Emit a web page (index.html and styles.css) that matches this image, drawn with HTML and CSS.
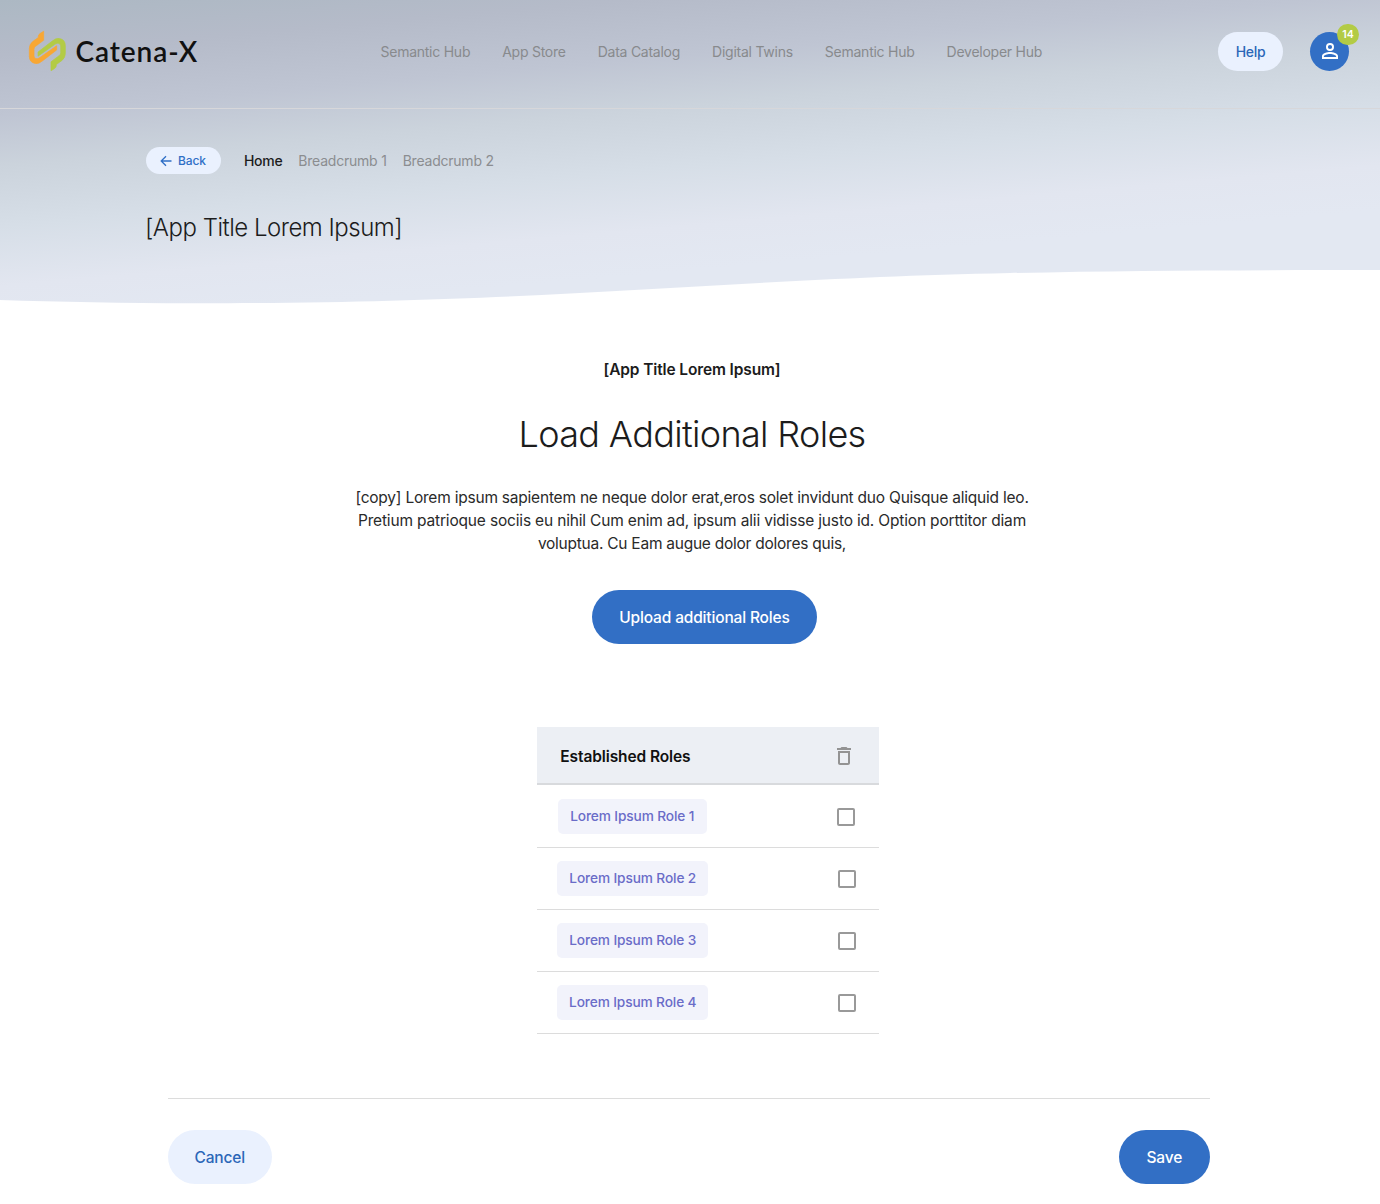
FILE: index.html
```html
<!DOCTYPE html>
<html lang="en">
<head>
<meta charset="utf-8">
<title>Catena-X – Load Additional Roles</title>
<link rel="stylesheet" href="styles.css">
</head>
<body>
<div class="hero">
  <header class="topbar">
    <a class="logo">
      <svg class="logo-mark" viewBox="0 0 132 138" preserveAspectRatio="none" stroke-width="2" aria-hidden="true">
        <path fill="#f8a734" stroke="#f8a734" d="M53 12V38L28 56Q24 59 24 64V81Q24 92 34 91Q39 90 43 87L92 54V66L50 97Q38 107 28 105Q10 102 10 84V62Q10 50 20 42L37 30V27Q37 22 42 19Z"/>
        <path fill="#b3cb45" stroke="#b3cb45" transform="rotate(180 64 69)" d="M53 12V38L28 56Q24 59 24 64V81Q24 92 34 91Q39 90 43 87L92 54V66L50 97Q38 107 28 105Q10 102 10 84V62Q10 50 20 42L37 30V27Q37 22 42 19Z"/>
      </svg>
      <span class="logo-name">Catena-X</span>
    </a>
    <nav class="nav">
      <a>Semantic Hub</a><a>App Store</a><a>Data Catalog</a><a>Digital Twins</a><a>Semantic Hub</a><a>Developer Hub</a>
    </nav>
    <div class="account">
      <button class="help">Help</button>
      <div class="avatar">
        <svg viewBox="0 0 24 24" width="24" height="24" fill="#fff" aria-hidden="true"><path d="M12 5.900a2.100 2.100 0 1 1 0 4.200 2.100 2.100 0 0 1 0-4.200m0 9c2.970 0 6.100 1.460 6.100 2.100v1.100H5.900V17c0-.64 3.130-2.100 6.100-2.100M12 4a4 4 0 1 0 0 8 4 4 0 0 0 0-8m0 9c-2.670 0-8 1.340-8 4v3h16v-3c0-2.660-5.330-4-8-4"/></svg>
        <span class="badge">14</span>
      </div>
    </div>
  </header>
  <div class="crumbs">
    <button class="back">
      <svg viewBox="0 0 12 12" width="12" height="12" fill="none" stroke="#2f6fc6" stroke-width="1.300" aria-hidden="true"><path d="M11.500 6H1.500M6 1.200L1.200 6L6 10.800"/></svg>
      Back
    </button>
    <a class="home">Home</a><a>Breadcrumb 1</a><a>Breadcrumb 2</a>
  </div>
  <div class="page-title">[App Title Lorem Ipsum]</div>
</div>
<main class="content">
  <div class="app-name">[App Title Lorem Ipsum]</div>
  <h1>Load Additional Roles</h1>
  <p class="copy"><span class="line">[copy] Lorem ipsum sapientem ne neque dolor erat,eros solet invidunt duo Quisque aliquid leo.</span><br><span class="line wide">Pretium patrioque sociis eu nihil Cum enim ad, ipsum alii vidisse justo id. Option porttitor diam</span><br>voluptua. Cu Eam augue dolor dolores quis,</p>
  <button class="btn primary upload">Upload additional Roles</button>
  <section class="roles">
    <div class="roles-head">
      <span>Established Roles</span>
      <svg viewBox="0 0 24 24" width="24" height="24" fill="#939393" aria-hidden="true"><path d="M6 19c0 1.100.9 2 2 2h8c1.100 0 2-.9 2-2V7H6zM8 9h8v10H8zm7.500-5l-1-1h-5l-1 1H5v2h14V4z"/></svg>
    </div>
    <div class="role"><span class="chip">Lorem Ipsum Role 1</span><span class="check"></span></div>
    <div class="role"><span class="chip">Lorem Ipsum Role 2</span><span class="check"></span></div>
    <div class="role"><span class="chip">Lorem Ipsum Role 3</span><span class="check"></span></div>
    <div class="role"><span class="chip">Lorem Ipsum Role 4</span><span class="check"></span></div>
  </section>
</main>
<footer class="actions">
  <button class="btn secondary">Cancel</button>
  <button class="btn primary save">Save</button>
</footer>
</body>
</html>
```
FILE: styles.css
```css
* { box-sizing: border-box; }
body { margin: 0; background: #fff; color: #1c1c1c; font-family: Inter, "Liberation Sans", sans-serif; white-space: nowrap; }
button { border: 0; padding: 0; font-family: inherit; }

.hero {
  height: 304px;
  background: linear-gradient(175deg, #acb8c3 0, #b5bbc9 55px, #bfc5d3 115px, #cbd3dc 165px, #d6dee7 225px, #e2e6f0 285px, #e3e8f2 330px);
  clip-path: path("M0 0H1380V270C1240 270 1130 270.500 1010 273C720 279 560 303 200 303.200C130 303.300 60 302 0 300Z");
}
.topbar { height: 109px; border-bottom: 1px solid #d7d7da; display: flex; align-items: flex-start; padding-left: 26px; }
.logo { display: flex; width: 354.500px; padding-top: 27px; }
.logo-mark { width: 44px; height: 48px; }
.logo-name { margin-left: 5.500px; font: 600 28px/48px Lato, sans-serif; letter-spacing: .9px; color: #111; }
.nav { display: flex; gap: 32px; padding-top: 42px; width: 837.500px; font-size: 14px; line-height: 20px; letter-spacing: -.25px; color: #888a8d; }
.account { display: flex; gap: 27px; padding-top: 31.500px; }
.help { width: 65px; height: 39px; border-radius: 20px; background: #eaf1fe; color: #2b67b8; font-size: 14px; font-weight: 500; letter-spacing: -.3px; }
.avatar { position: relative; width: 39px; height: 39px; border-radius: 50%; background: #326fc5; display: grid; place-items: center; }
.badge { position: absolute; left: 27px; top: -8px; width: 22px; height: 21px; border-radius: 11px; background: #b3cb45; color: #fff; font-size: 10.500px; line-height: 21px; font-weight: 600; text-align: center; }

.crumbs { display: flex; align-items: center; margin: 38px 0 0 145.500px; height: 27px; gap: 16px; font-size: 14px; letter-spacing: -.22px; color: #8b8d90; }
.back { display: flex; align-items: center; justify-content: center; gap: 6px; width: 75px; height: 27px; margin-right: 7.500px; border-radius: 14px; background: #eaf1fe; color: #2f6fc6; font-size: 12px; font-weight: 500; letter-spacing: -.1px; }
.home { color: #1c1c1c; font-weight: 500; letter-spacing: -.3px; }
.page-title { margin: 38px 0 0 145px; font-size: 24px; line-height: 32px; font-weight: 300; letter-spacing: -.5px; }

.content { display: flex; flex-direction: column; align-items: center; padding-left: 4px; }
.app-name { margin-top: 56px; font-size: 15.500px; line-height: 20px; font-weight: 600; letter-spacing: -.13px; }
h1 { margin: 31.500px 0 0; font-size: 36px; line-height: 44px; font-weight: 300; letter-spacing: -.66px; }
.copy { margin: 30px 0 0; font-size: 15.500px; line-height: 23.400px; letter-spacing: -.25px; text-align: center; color: #2a2a2a; }
.line { letter-spacing: -.22px; }
.line.wide { letter-spacing: -.17px; }
.btn { height: 54.500px; border-radius: 28px; font-size: 15.500px; font-weight: 500; letter-spacing: -.16px; }
.primary { background: #326fc5; color: #fff; }
.secondary { width: 104.500px; background: #eaf1fe; color: #2b67b8; }
.upload { width: 225px; margin: 34px 0 0 25px; padding-top: 1px; }
.save { width: 90.500px; }

.roles { width: 342.500px; margin: 82.300px 0 0 32px; }
.roles-head { display: flex; align-items: center; justify-content: space-between; height: 58px; padding: 3px 23px 0 23.500px; background: #eceff4; border-bottom: 2px solid #d8dadd; font-size: 15.500px; font-weight: 600; letter-spacing: -.1px; color: #111; }
.role { display: flex; align-items: center; justify-content: space-between; height: 62px; padding: 1px 23px 0 20.500px; border-bottom: 1px solid #dcdcdc; }
.role:nth-child(2) { height: 63px; padding: 2px 24px 0 21px; }
.chip { width: 151px; height: 35px; border-radius: 5px; background: #f2f3fb; color: #6a6cc8; font-size: 13.700px; line-height: 35px; font-weight: 500; letter-spacing: -.12px; text-align: center; }
.role:nth-child(2) .chip { width: 149px; }
.check { width: 18px; height: 18px; border: 2px solid #999; border-radius: 2px; }

.actions { display: flex; justify-content: space-between; width: 1042px; margin: 64px 0 0 167.500px; padding-top: 31px; border-top: 1px solid #dcdcdc; }
.actions .btn { padding-top: 1px; }
```
